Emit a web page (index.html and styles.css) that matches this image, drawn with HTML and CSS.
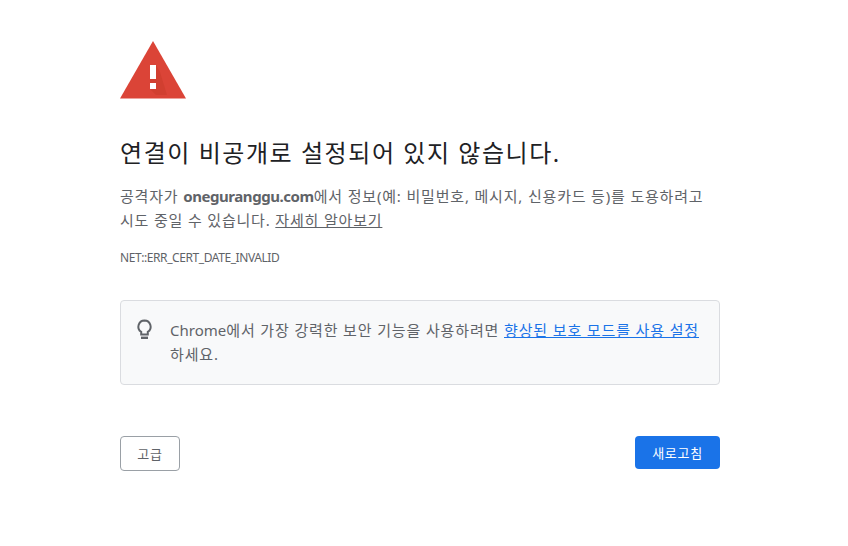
FILE: index.html
```html
<!DOCTYPE html>
<html lang="ko">
<head>
<meta charset="utf-8">
<title>개인 정보 보호 오류</title>
<link rel="stylesheet" href="styles.css">
</head>
<body>
<main class="page">
  <svg class="warn" width="66" height="58" viewBox="0 0 66 58" aria-hidden="true">
    <polygon points="33,0 66,57.5 0,57.5" fill="#db4437"/>
    <polygon points="36,24 36,38 30,38 30,42 36,42 36,48 30,48 36,54 47,54 40,31" fill="#c53929" opacity=".45"/>
    <rect x="30" y="24" width="6" height="14" fill="#fff"/>
    <rect x="30" y="42" width="6" height="6" fill="#fff"/>
  </svg>
  <h1 class="title">연결이 비공개로 설정되어 있지 않습니다.</h1>
  <p class="desc">공격자가 <strong>oneguranggu.com</strong>에서 정보(예: 비밀번호, 메시지, 신용카드 등)를 도용하려고<br>시도 중일 수 있습니다. <a class="learn" href="#">자세히 알아보기</a></p>
  <p class="code">NET::ERR_CERT_DATE_INVALID</p>
  <section class="tip">
    <svg class="bulb" width="18" height="22" viewBox="0 0 18 22" aria-hidden="true">
      <path d="M8.5 1.500a6.200 6.200 0 0 0-3.300 11.400V15.500h6.600v-2.600A6.200 6.200 0 0 0 8.500 1.500Z" fill="none" stroke="#5f6368" stroke-width="2"/>
      <rect x="5" y="17.600" width="7" height="2.400" fill="#5f6368"/>
    </svg>
    <p class="tip-text"><span class="latin">Chrome</span>에서 가장 강력한 보안 기능을 사용하려면 <a class="tip-link" href="#">향상된 보호 모드를 사용 설정</a><br>하세요.</p>
  </section>
  <div class="actions">
    <button class="btn btn-ghost" type="button">고급</button>
    <button class="btn btn-primary" type="button">새로고침</button>
  </div>
</main>
</body>
</html>
```
FILE: styles.css
```css
* { box-sizing: border-box; }
html, body { margin: 0; background: #fff; }
body {
  font-family: "Noto Sans", "Noto Sans CJK KR", sans-serif;
  color: #5f6368;
  overflow: hidden;
}
.page {
  width: 600px;
  margin-left: 120px;
  padding-top: 41px;
  display: flex;
  flex-direction: column;
  align-items: stretch;
}
.warn { display: block; }
.title {
  margin: 36px 0 0;
  font-size: 24px;
  line-height: 36px;
  font-weight: 400;
  color: #202124;
  letter-spacing: 1.55px;
}
.desc {
  margin: 13px 0 0;
  font-size: 15px;
  line-height: 24px;
  letter-spacing: .82px;
}
.desc strong { font-weight: 700; letter-spacing: -.44px; }
.learn { color: #5f6368; text-decoration: underline; }
.code {
  margin: 17px 0 0;
  font-size: 12px;
  line-height: 18px;
  text-transform: uppercase;
  letter-spacing: -.42px;
}
.tip {
  margin-top: 33px;
  height: 85px;
  display: flex;
  gap: 16px;
  padding: 17px 15px;
  background: #f8f9fa;
  border: 1px solid #dadce0;
  border-radius: 4px;
}
.bulb { flex: none; margin-top: 1px; }
.tip-text { margin: 0; font-size: 15px; line-height: 24px; letter-spacing: .86px; white-space: nowrap; }
.latin { letter-spacing: 0; }
.tip-link { color: #1a73e8; text-decoration: underline; }
.actions {
  margin-top: 51px;
  display: flex;
  justify-content: space-between;
  align-items: flex-start;
}
.btn {
  font-family: inherit;
  font-size: 13px;
  letter-spacing: .7px;
  border-radius: 4px;
  cursor: pointer;
}
.btn-ghost {
  width: 60px;
  height: 35px;
  background: #fff;
  color: #5f6368;
  border: 1px solid #9aa0a6;
}
.btn-primary {
  width: 85px;
  height: 33px;
  background: #1a73e8;
  color: #fff;
  border: 0;
}
```
